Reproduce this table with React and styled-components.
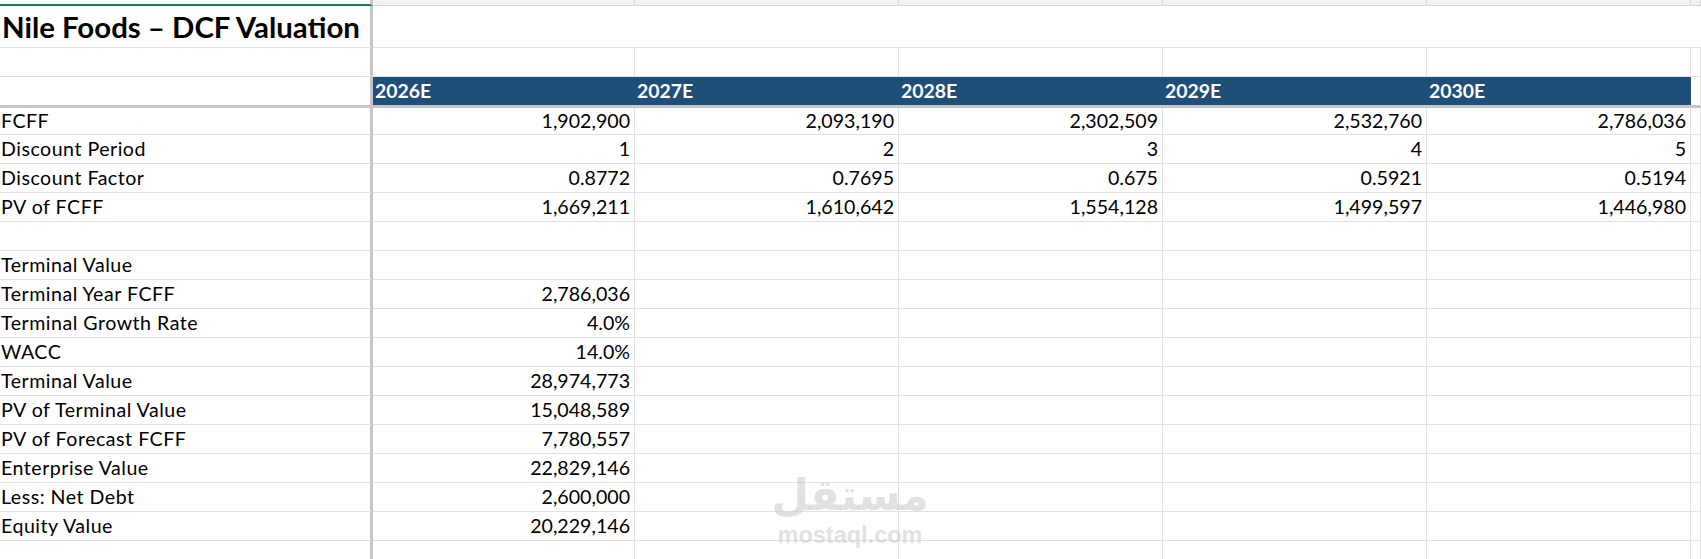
import React from 'react';
import styled, { createGlobalStyle } from 'styled-components';

const GlobalStyle = createGlobalStyle`
  html, body {
    margin: 0;
    padding: 0;
    background: #ffffff;
    overflow: hidden;
  }
  * {
    box-sizing: border-box;
  }
`;

const GRID = '#e1e1e1';
const FREEZE = '#c6c6c6';
const BLUE = '#1f4e78';

// widths of column A (with freeze line), B..F, and the cut-off G
const COLS = '373px 262px 264px 264px 264px 264px 1fr';

const Sheet = styled.div`
  position: relative;
  width: 1701px;
  height: 559px;
  overflow: hidden;
  font-family: Lato, 'Open Sans', sans-serif;
  color: #000;
`;

const Row = styled.div`
  display: grid;
  grid-template-columns: ${COLS};
  height: ${(p) => p.$h}px;
`;

const Cell = styled.div`
  border-bottom: ${(p) => (p.$thick ? `3px solid ${FREEZE}` : `1px solid ${GRID}`)};
  border-right: ${(p) => (p.$noRight ? 'none' : `1px solid ${GRID}`)};
  font-size: 19.6px;
  line-height: ${(p) => p.$lh || 28}px;
  padding: 0 4px 0 1px;
  white-space: nowrap;
  overflow: hidden;
  text-align: ${(p) => (p.$num ? 'right' : 'left')};
`;

const LabelCell = styled(Cell)`
  border-right: 3px solid ${FREEZE};
  letter-spacing: 0.5px;
`;

const StripCell = styled.div`
  background: ${(p) => (p.$active ? '#ffffff' : '#f2f2f2')};
  border-bottom: ${(p) => (p.$active ? '2px solid #137e43' : '1px solid #d6d6d6')};
  border-right: ${(p) => (p.$active ? `3px solid ${FREEZE}` : '1px solid #d6d6d6')};
`;

const TitleCell = styled(LabelCell)`
  font-size: 29.4px;
  font-weight: 700;
  line-height: 42px;
  letter-spacing: 0;
  padding-left: 2px;
`;

const HeadCell = styled(Cell)`
  background: ${BLUE};
  color: #ffffff;
  font-size: 19.4px;
  font-weight: 700;
  padding-left: 2px;
`;

const Watermark = styled.div`
  position: absolute;
  left: 772px;
  top: 470px;
  width: 156px;
  display: flex;
  flex-direction: column;
  align-items: center;
  color: rgba(200, 200, 200, 0.55);
  pointer-events: none;
`;

const WaterArabic = styled.div`
  font-family: 'DejaVu Sans', sans-serif;
  font-weight: 700;
  font-size: 43px;
  line-height: 50px;
`;

const WaterLatin = styled.div`
  font-family: 'Liberation Sans', Arial, sans-serif;
  font-weight: 700;
  font-size: 23.5px;
  line-height: 24px;
  margin-top: 3px;
`;

const years = ['2026E', '2027E', '2028E', '2029E', '2030E'];

const rows = [
  ['FCFF', ['1,902,900', '2,093,190', '2,302,509', '2,532,760', '2,786,036']],
  ['Discount Period', ['1', '2', '3', '4', '5']],
  ['Discount Factor', ['0.8772', '0.7695', '0.675', '0.5921', '0.5194']],
  ['PV of FCFF', ['1,669,211', '1,610,642', '1,554,128', '1,499,597', '1,446,980']],
  ['', []],
  ['Terminal Value', []],
  ['Terminal Year FCFF', ['2,786,036']],
  ['Terminal Growth Rate', ['4.0%']],
  ['WACC', ['14.0%']],
  ['Terminal Value', ['28,974,773']],
  ['PV of Terminal Value', ['15,048,589']],
  ['PV of Forecast FCFF', ['7,780,557']],
  ['Enterprise Value', ['22,829,146']],
  ['Less: Net Debt', ['2,600,000']],
  ['Equity Value', ['20,229,146']],
  ['', []],
];

const DataRow = ({ label, values, first }) => (
  <Row $h={first ? 27 : 29}>
    <LabelCell $lh={first ? 26 : 28}>{label}</LabelCell>
    {[0, 1, 2, 3, 4].map((i) => (
      <Cell key={i} $num $lh={first ? 26 : 28}>
        {values[i] || ''}
      </Cell>
    ))}
    <Cell />
  </Row>
);

const App = () => {
  return (
    <>
      <GlobalStyle />
      <Sheet>
        <Row $h={6}>
          <StripCell $active />
          {[0, 1, 2, 3, 4, 5].map((i) => (
            <StripCell key={i} />
          ))}
        </Row>
        <Row $h={42}>
          <TitleCell>Nile Foods – DCF Valuation</TitleCell>
          {[0, 1, 2, 3, 4, 5].map((i) => (
            <Cell key={i} $noRight />
          ))}
        </Row>
        <Row $h={29}>
          <LabelCell />
          {[0, 1, 2, 3, 4, 5].map((i) => (
            <Cell key={i} />
          ))}
        </Row>
        <Row $h={31}>
          <LabelCell $thick />
          {years.map((y) => (
            <HeadCell key={y} $thick $noRight>
              {y}
            </HeadCell>
          ))}
          <Cell $thick />
        </Row>
        {rows.map(([label, values], i) => (
          <DataRow key={i} label={label} values={values} first={i === 0} />
        ))}
        <Watermark>
          <WaterArabic>مستقل</WaterArabic>
          <WaterLatin>mostaql.com</WaterLatin>
        </Watermark>
      </Sheet>
    </>
  );
};

export default App;
